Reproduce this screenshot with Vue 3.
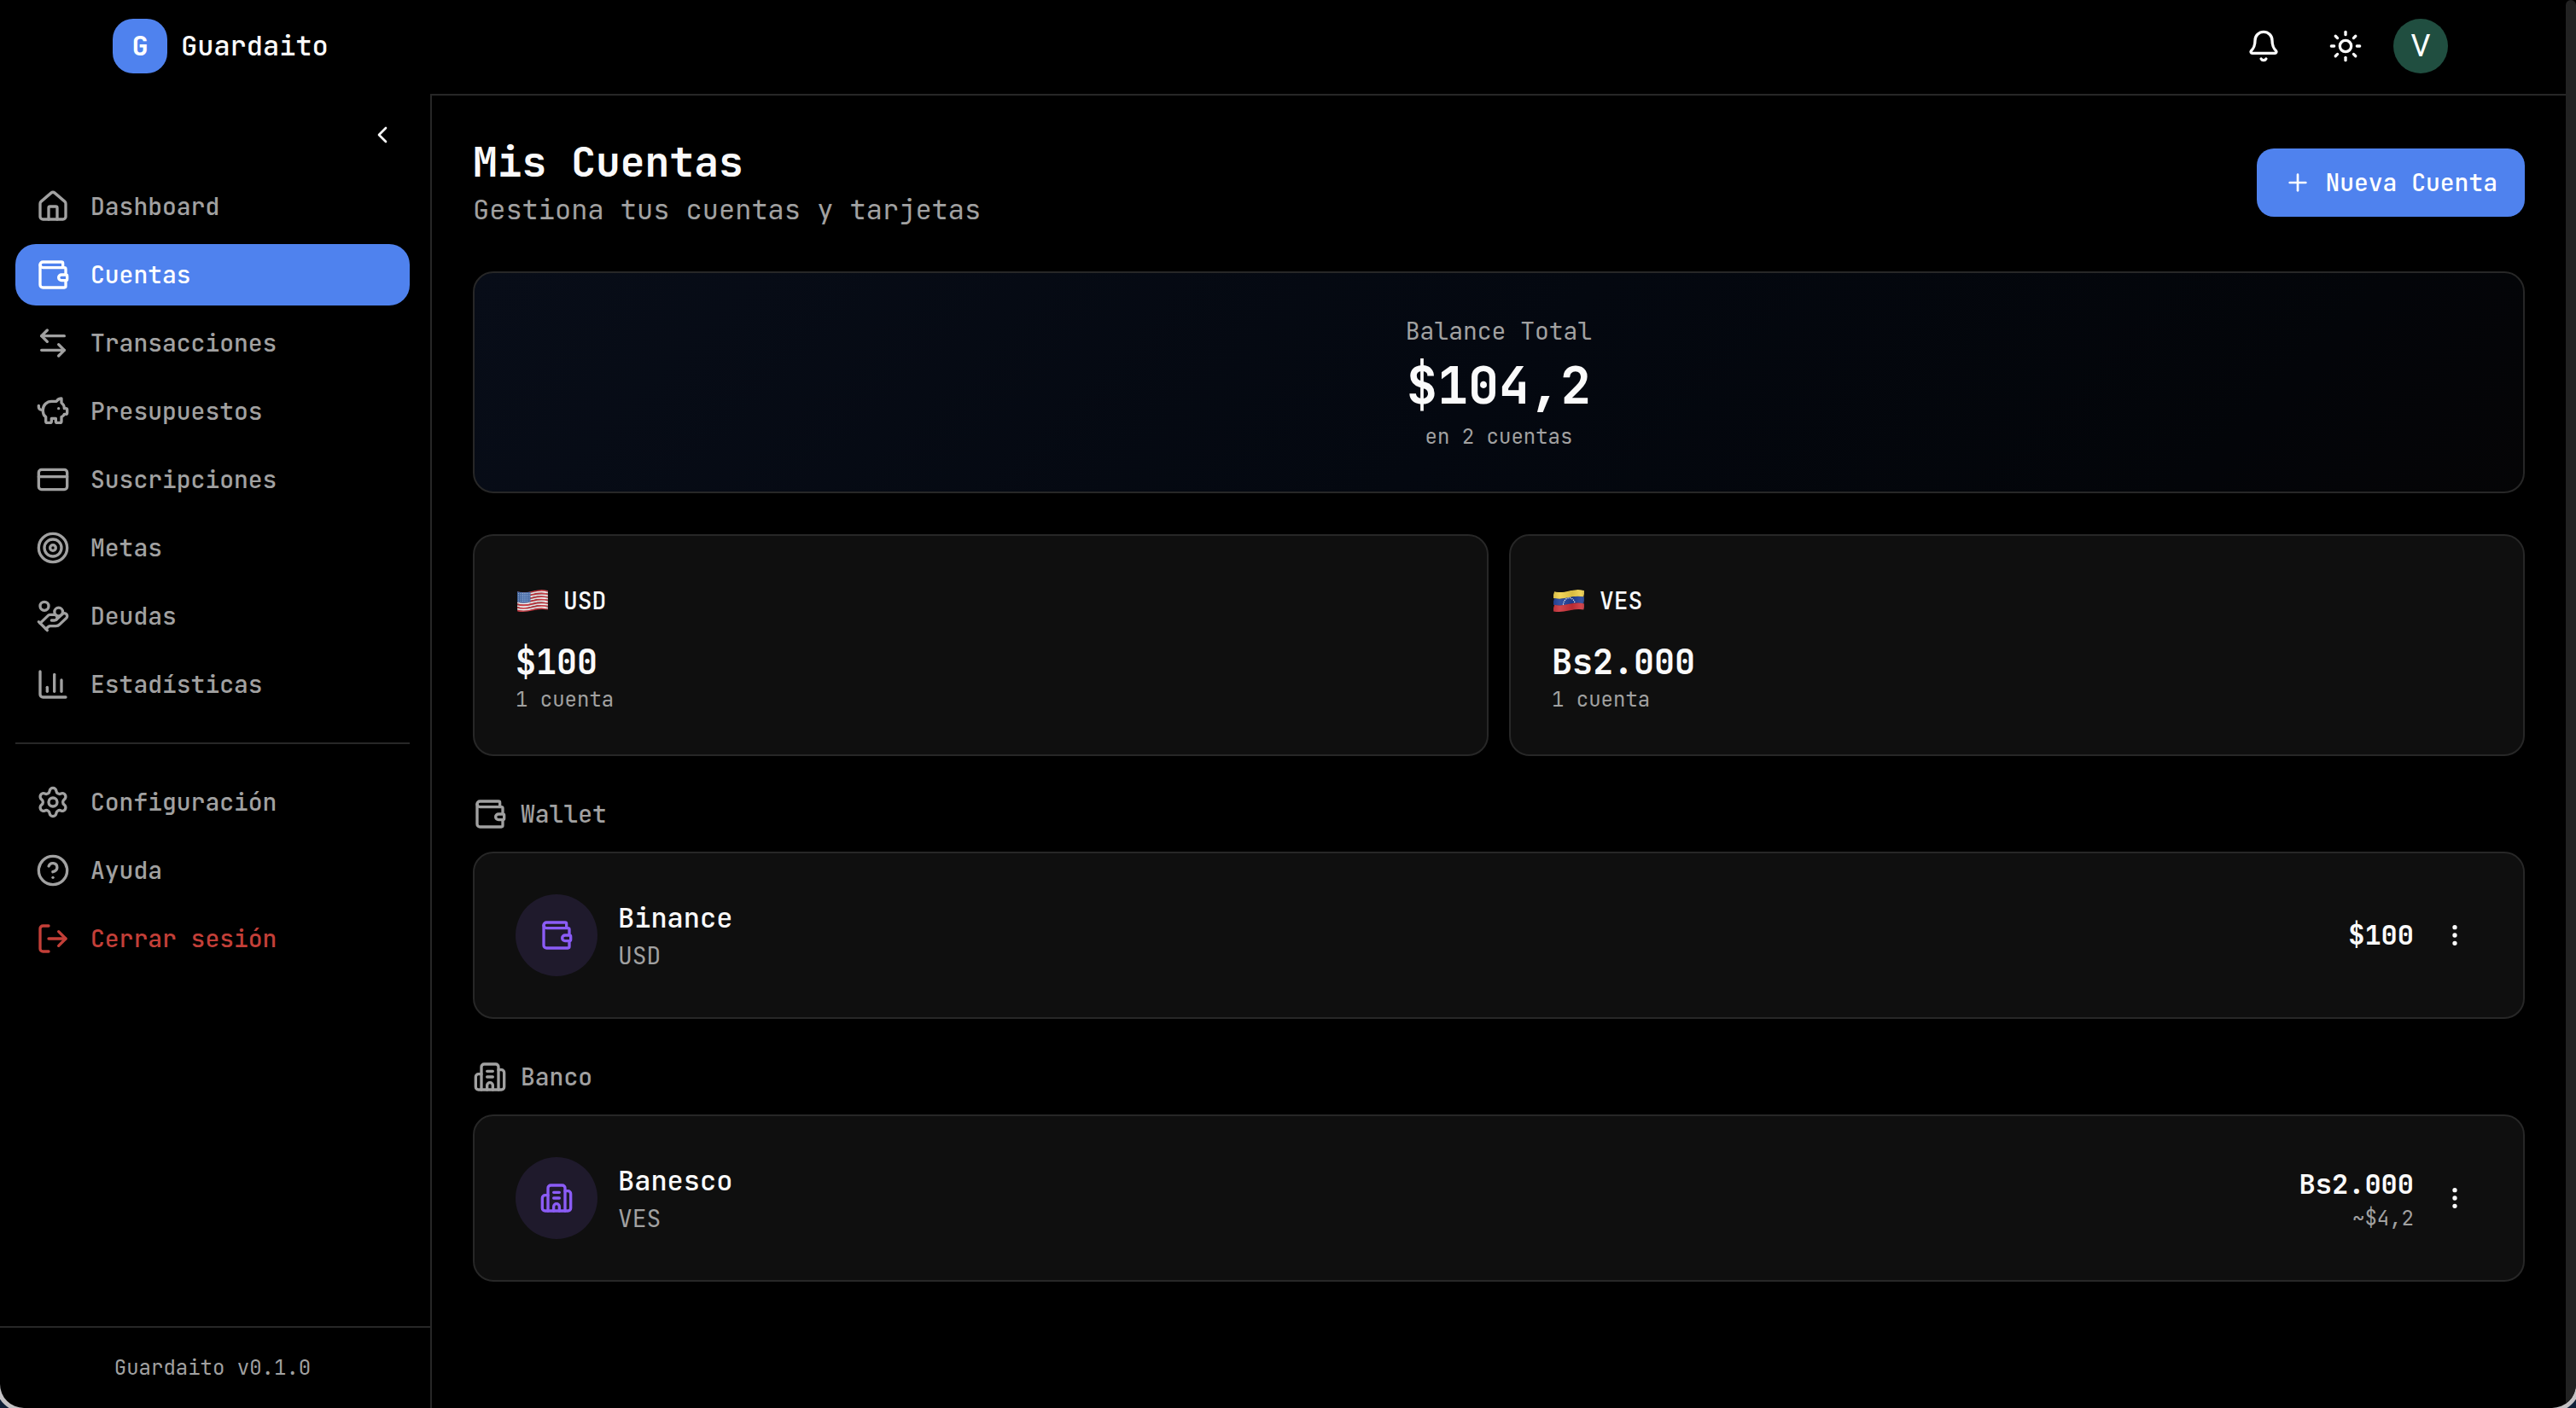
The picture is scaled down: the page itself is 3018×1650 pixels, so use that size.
<template>
  <div class="window">
    <div class="page">
      <!-- Barra superior -->
      <header class="topbar">
        <a href="#" class="brand">
          <span class="brand-logo">G</span>
          <span class="brand-name">Guardaito</span>
        </a>
        <div class="topbar-actions">
          <button class="icon-btn" aria-label="Notificaciones">
            <AppIcon name="bell" />
          </button>
          <button class="icon-btn" aria-label="Cambiar tema">
            <AppIcon name="sun" />
          </button>
          <button class="avatar" aria-label="Perfil">V</button>
        </div>
      </header>

      <div class="body">
        <!-- Menú lateral -->
        <aside class="sidebar">
          <div class="sidebar-top">
            <button class="collapse-btn" aria-label="Contraer menú">
              <AppIcon name="chevron" :size="32" />
            </button>
          </div>

          <nav class="nav">
            <a
              v-for="item in mainItems"
              :key="item.label"
              href="#"
              class="nav-item"
              :class="{ active: item.label === current }"
              @click.prevent="current = item.label"
            >
              <AppIcon :name="item.icon" />
              <span>{{ item.label }}</span>
            </a>
            <hr class="divider" />
            <a
              v-for="item in otherItems"
              :key="item.label"
              href="#"
              class="nav-item"
            >
              <AppIcon :name="item.icon" />
              <span>{{ item.label }}</span>
            </a>
            <button class="nav-item danger">
              <AppIcon name="logout" />
              <span>Cerrar sesión</span>
            </button>
          </nav>

          <footer class="version">Guardaito v0.1.0</footer>
        </aside>

        <!-- Contenido -->
        <main class="content">
          <div class="page-head">
            <div>
              <h1>Mis Cuentas</h1>
              <p class="subtitle">Gestiona tus cuentas y tarjetas</p>
            </div>
            <button class="btn-primary">
              <AppIcon name="plus" :size="32" />
              <span>Nueva Cuenta</span>
            </button>
          </div>

          <section class="card balance">
            <p class="label">Balance Total</p>
            <p class="total">$104,2</p>
            <p class="small">en 2 cuentas</p>
          </section>

          <div class="currencies">
            <section v-for="c in currencies" :key="c.code" class="card">
              <div class="currency-head">
                <svg class="flag" viewBox="0 0 40 28" aria-hidden="true">
                  <defs>
                    <clipPath :id="'flag-' + c.code">
                      <path :d="flagShape" />
                    </clipPath>
                    <linearGradient :id="'shade-' + c.code" x1="0" x2="1">
                      <stop offset="0" stop-color="#000" stop-opacity="0.15" />
                      <stop offset="0.25" stop-color="#fff" stop-opacity="0.1" />
                      <stop offset="0.6" stop-color="#000" stop-opacity="0.1" />
                      <stop offset="0.85" stop-color="#fff" stop-opacity="0.1" />
                      <stop offset="1" stop-color="#000" stop-opacity="0.3" />
                    </linearGradient>
                  </defs>
                  <g :clip-path="`url(#flag-${c.code})`">
                    <template v-if="c.code === 'USD'">
                      <path
                        v-for="n in 13"
                        :key="n"
                        :d="wave"
                        fill="none"
                        :stroke="n % 2 ? '#c8313a' : '#f4f4f4'"
                        stroke-width="2"
                        :transform="`translate(0 ${(n - 1) * 1.8 + 0.9})`"
                      />
                      <path
                        d="M2 3C7 4.6 12 4.4 17.500 3.200V15.600C12 17 7 17 2 15.600Z"
                        fill="#3f68a8"
                      />
                      <g fill="#c3d3ec">
                        <circle
                          v-for="n in 30"
                          :key="n"
                          :cx="3.5 + ((n - 1) % 6) * 2.5"
                          :cy="5.4 + Math.floor((n - 1) / 6) * 2.2"
                          r="0.5"
                        />
                      </g>
                    </template>
                    <template v-else>
                      <path
                        v-for="(color, i) in ['#f0d048', '#1f3f98', '#cc3038']"
                        :key="color"
                        :d="wave"
                        fill="none"
                        :stroke="color"
                        stroke-width="8"
                        :transform="`translate(0 ${i * 7.8 + 3.9})`"
                      />
                      <path
                        d="M13.500 18C15 8.600 25 8.600 27 16.300"
                        fill="none"
                        stroke="#fff"
                        stroke-width="1.400"
                        stroke-linecap="round"
                        stroke-dasharray="0.1 2.3"
                      />
                    </template>
                    <rect width="40" height="28" :fill="`url(#shade-${c.code})`" />
                  </g>
                </svg>
                <span>{{ c.code }}</span>
              </div>
              <p class="currency-amount">{{ c.amount }}</p>
              <p class="small">{{ c.detail }}</p>
            </section>
          </div>

          <section v-for="g in groups" :key="g.title" class="group">
            <h2>
              <AppIcon :name="g.icon" />
              <span>{{ g.title }}</span>
            </h2>
            <div v-for="a in g.accounts" :key="a.name" class="card account">
              <div class="account-icon">
                <AppIcon :name="g.icon" />
              </div>
              <div class="account-info">
                <p class="account-name">{{ a.name }}</p>
                <p class="label">{{ a.currency }}</p>
              </div>
              <div class="account-balance">
                <p class="account-amount">{{ a.amount }}</p>
                <p v-if="a.converted" class="small">{{ a.converted }}</p>
              </div>
              <button class="more-btn" :aria-label="'Opciones de ' + a.name">
                <AppIcon name="more" :size="32" />
              </button>
            </div>
          </section>
        </main>
      </div>
    </div>
    <div class="scroll-track"></div>
  </div>
</template>

<script setup>
import { ref, h } from 'vue';

// Iconos: trazos y círculos [cx, cy, r] sobre una caja de 24
const icons = {
  bell: {
    paths: [
      'M10.268 21a2 2 0 0 0 3.464 0',
      'M3.262 15.326A1 1 0 0 0 4 17h16a1 1 0 0 0 .74-1.673C19.41 13.956 18 12.499 18 8A6 6 0 0 0 6 8c0 4.499-1.411 5.956-2.738 7.326',
    ],
  },
  sun: {
    paths: [
      'M12 2v2',
      'M12 20v2',
      'm4.93 4.93 1.41 1.41',
      'm17.66 17.66 1.41 1.41',
      'M2 12h2',
      'M20 12h2',
      'm6.34 17.66-1.41 1.41',
      'm19.07 4.93-1.41 1.41',
    ],
    circles: [[12, 12, 4]],
  },
  chevron: { paths: ['m15 18-6-6 6-6'] },
  plus: { paths: ['M5 12h14', 'M12 5v14'] },
  more: {
    circles: [
      [12, 12, 1],
      [12, 5, 1],
      [12, 19, 1],
    ],
  },
  home: {
    paths: [
      'M15 21v-8a1 1 0 0 0-1-1h-4a1 1 0 0 0-1 1v8',
      'M3 10a2 2 0 0 1 .709-1.528l7-5.999a2 2 0 0 1 2.582 0l7 5.999A2 2 0 0 1 21 10v9a2 2 0 0 1-2 2H5a2 2 0 0 1-2-2z',
    ],
  },
  wallet: {
    paths: [
      'M19 7V4a1 1 0 0 0-1-1H5a2 2 0 0 0 0 4h15a1 1 0 0 1 1 1v4h-3a2 2 0 0 0 0 4h3a1 1 0 0 0 1-1v-2a1 1 0 0 0-1-1',
      'M3 5v14a2 2 0 0 0 2 2h15a1 1 0 0 0 1-1v-4',
    ],
  },
  transfer: {
    paths: ['M8 3 4 7l4 4', 'M4 7h16', 'm16 21 4-4-4-4', 'M20 17H4'],
  },
  piggy: {
    paths: [
      'M11 17h3v2a1 1 0 0 0 1 1h2a1 1 0 0 0 1-1v-3a3.16 3.16 0 0 0 2-2h1a1 1 0 0 0 1-1v-2a1 1 0 0 0-1-1h-1a5 5 0 0 0-2-4V3a4 4 0 0 0-3.2 1.6l-.3.4H11a6 6 0 0 0-6 6v1a5 5 0 0 0 2 4v3a1 1 0 0 0 1 1h2a1 1 0 0 0 1-1z',
      'M16 10h.01',
      'M2 8v1a2 2 0 0 0 2 2h1',
    ],
  },
  card: {
    paths: [
      'M4 5h16a2 2 0 0 1 2 2v10a2 2 0 0 1-2 2H4a2 2 0 0 1-2-2V7a2 2 0 0 1 2-2z',
      'M2 10h20',
    ],
  },
  target: {
    circles: [
      [12, 12, 10],
      [12, 12, 6],
      [12, 12, 2],
    ],
  },
  coins: {
    paths: [
      'M11 15h2a2 2 0 1 0 0-4h-3c-.6 0-1.1.2-1.4.6L3 17',
      'm7 21 1.6-1.4c.3-.4.8-.6 1.4-.6h4c1.1 0 2.1-.4 2.8-1.2l4.6-4.4a2 2 0 0 0-2.75-2.91l-4.2 3.9',
      'm2 16 6 6',
    ],
    circles: [
      [16, 9, 2.9],
      [6, 5, 3],
    ],
  },
  chart: {
    paths: ['M3 3v16a2 2 0 0 0 2 2h16', 'M18 17V9', 'M13 17V5', 'M8 17v-3'],
  },
  settings: {
    paths: [
      'M9.671 4.136a2.34 2.34 0 0 1 4.659 0 2.34 2.34 0 0 0 3.319 1.915 2.34 2.34 0 0 1 2.33 4.033 2.34 2.34 0 0 0 0 3.831 2.34 2.34 0 0 1-2.33 4.033 2.34 2.34 0 0 0-3.319 1.915 2.34 2.34 0 0 1-4.659 0 2.34 2.34 0 0 0-3.32-1.915 2.34 2.34 0 0 1-2.33-4.033 2.34 2.34 0 0 0 0-3.831A2.34 2.34 0 0 1 6.35 6.051a2.34 2.34 0 0 0 3.319-1.915',
    ],
    circles: [[12, 12, 3]],
  },
  help: {
    paths: ['M9.09 9a3 3 0 0 1 5.83 1c0 2-3 3-3 3', 'M12 17h.01'],
    circles: [[12, 12, 10]],
  },
  logout: {
    paths: [
      'm16 17 5-5-5-5',
      'M21 12H9',
      'M9 21H5a2 2 0 0 1-2-2V5a2 2 0 0 1 2-2h4',
    ],
  },
  building: {
    paths: [
      'M10 12h4',
      'M10 8h4',
      'M14 21v-3a2 2 0 0 0-4 0v3',
      'M6 10H4a2 2 0 0 0-2 2v7a2 2 0 0 0 2 2h16a2 2 0 0 0 2-2V9a2 2 0 0 0-2-2h-2',
      'M6 21V5a2 2 0 0 1 2-2h8a2 2 0 0 1 2 2v16',
    ],
  },
};

const AppIcon = ({ name, size = 40 }) => {
  const { paths = [], circles = [] } = icons[name];
  return h(
    'svg',
    {
      class: 'icon',
      width: size,
      height: size,
      viewBox: '0 0 24 24',
      'aria-hidden': 'true',
    },
    [
      ...paths.map((d) => h('path', { d })),
      ...circles.map(([cx, cy, r]) => h('circle', { cx, cy, r })),
    ],
  );
};
AppIcon.props = ['name', 'size'];

// Banderas ondeadas
const wave = 'M2 3C8 5 14 4 20 2.500S32 0.500 38 2';
const flagShape = wave + 'V24.500C32 23.500 26 24 20 25.500S8 27.500 2 26.500Z';

const current = ref('Cuentas');

const mainItems = [
  { label: 'Dashboard', icon: 'home' },
  { label: 'Cuentas', icon: 'wallet' },
  { label: 'Transacciones', icon: 'transfer' },
  { label: 'Presupuestos', icon: 'piggy' },
  { label: 'Suscripciones', icon: 'card' },
  { label: 'Metas', icon: 'target' },
  { label: 'Deudas', icon: 'coins' },
  { label: 'Estadísticas', icon: 'chart' },
];

const otherItems = [
  { label: 'Configuración', icon: 'settings' },
  { label: 'Ayuda', icon: 'help' },
];

const currencies = [
  { code: 'USD', amount: '$100', detail: '1 cuenta' },
  { code: 'VES', amount: 'Bs2.000', detail: '1 cuenta' },
];

const groups = [
  {
    title: 'Wallet',
    icon: 'wallet',
    accounts: [{ name: 'Binance', currency: 'USD', amount: '$100' }],
  },
  {
    title: 'Banco',
    icon: 'building',
    accounts: [
      {
        name: 'Banesco',
        currency: 'VES',
        amount: 'Bs2.000',
        converted: '~$4,2',
      },
    ],
  },
];
</script>

<style>
body {
  background: #0f2038;
}
</style>

<style scoped>
* {
  box-sizing: border-box;
}

h1,
h2,
p {
  margin: 0;
}

button {
  padding: 0;
  border: none;
  background: none;
  color: inherit;
  font: inherit;
  cursor: pointer;
}

a {
  color: inherit;
  text-decoration: none;
}

/* Ventana */
.window {
  display: flex;
  min-height: 100vh;
  background: #000;
  color: #fafafa;
  font-family: 'JetBrains Mono', 'DejaVu Sans Mono', monospace;
  font-size: 28px;
  line-height: 40px;
  border-radius: 0 0 28px 28px;
  box-shadow: 0 0 0 5px #c4c2c4;
  overflow: hidden;
}

.page {
  flex: 1;
  min-width: 0;
  display: flex;
  flex-direction: column;
}

.scroll-track {
  width: 12px;
  background: #222;
  border-radius: 6px 6px 0 0;
}

.icon {
  flex-shrink: 0;
  display: block;
  fill: none;
  stroke: currentColor;
  stroke-width: 2;
  stroke-linecap: round;
  stroke-linejoin: round;
}

/* Barra superior */
.topbar {
  display: flex;
  align-items: center;
  justify-content: space-between;
  padding: 22px 138px 24px 132px;
}

.brand {
  display: flex;
  align-items: center;
  gap: 16px;
  font-size: 32px;
}

.brand-name {
  font-weight: 500;
}

.brand-logo {
  display: flex;
  align-items: center;
  justify-content: center;
  width: 64px;
  height: 64px;
  border-radius: 24px;
  background: #4f82ee;
  color: #fff;
  font-weight: 700;
}

.topbar-actions {
  display: flex;
  align-items: center;
  gap: 16px;
}

.icon-btn {
  display: flex;
  align-items: center;
  justify-content: center;
  width: 80px;
  height: 64px;
}

.avatar {
  width: 64px;
  height: 64px;
  border-radius: 50%;
  background: #204e40;
  color: #fff;
  font-family: Roboto, sans-serif;
  font-size: 36px;
  font-weight: 400;
}

.body {
  flex: 1;
  display: flex;
}

/* Menú lateral */
.sidebar {
  flex-shrink: 0;
  display: flex;
  flex-direction: column;
  width: 506px;
  border-right: 2px solid #272727;
}

.sidebar-top {
  display: flex;
  justify-content: flex-end;
  padding: 16px 24px;
}

.collapse-btn {
  display: flex;
  align-items: center;
  justify-content: center;
  width: 64px;
  height: 64px;
}

.nav {
  display: flex;
  flex-direction: column;
  gap: 8px;
  padding: 0 24px 0 18px;
}

.nav-item {
  display: flex;
  align-items: center;
  gap: 24px;
  height: 72px;
  padding: 0 24px;
  border-radius: 24px;
  color: #a1a1a1;
  font-weight: 500;
}

.nav-item.active {
  background: #4f82ee;
  color: #fff;
}

.nav-item.danger {
  color: #c33f38;
}

.divider {
  width: 100%;
  height: 2px;
  margin: 24px 0;
  border: none;
  background: #272727;
}

.version {
  margin-top: auto;
  padding: 31px 24px 31px 18px;
  border-top: 2px solid #272727;
  color: #a1a1a1;
  font-size: 24px;
  line-height: 32px;
  text-align: center;
}

/* Contenido */
.content {
  flex: 1;
  min-width: 0;
  display: flex;
  flex-direction: column;
  gap: 48px;
  padding: 46px 48px 48px;
  border-top: 2px solid #272727;
}

.page-head {
  display: flex;
  align-items: center;
  justify-content: space-between;
}

h1 {
  font-size: 48px;
  font-weight: 700;
  line-height: 64px;
}

.subtitle {
  color: #a1a1a1;
  font-size: 32px;
  line-height: 48px;
}

.btn-primary {
  display: flex;
  align-items: center;
  gap: 16px;
  height: 80px;
  padding: 0 32px;
  border-radius: 20px;
  background: #4f82ee;
  color: #fff;
  font-weight: 500;
}

.card {
  padding: 48px;
  border: 2px solid #272727;
  border-radius: 24px;
  background: #0f0f0f;
}

.label {
  color: #a1a1a1;
}

.small {
  color: #a1a1a1;
  font-size: 24px;
  line-height: 32px;
}

.balance {
  background: linear-gradient(
    135deg,
    #080d18,
    #040810 50%,
    #030509 85%,
    #050506
  );
  text-align: center;
}

.total {
  margin: 8px 0;
  font-size: 60px;
  font-weight: 700;
  line-height: 72px;
}

.currencies {
  display: grid;
  grid-template-columns: 1fr 1fr;
  gap: 24px;
}

.currency-head {
  display: flex;
  align-items: center;
  gap: 16px;
  height: 56px;
  margin-bottom: 16px;
  font-weight: 500;
}

.flag {
  width: 40px;
  height: 28px;
}

.currency-amount {
  font-size: 40px;
  font-weight: 700;
  line-height: 56px;
}

/* Grupos de cuentas */
.group h2 {
  display: flex;
  align-items: center;
  gap: 16px;
  margin-bottom: 24px;
  color: #a1a1a1;
  font-size: 28px;
  font-weight: 500;
}

.account {
  display: flex;
  align-items: center;
}

.account-icon {
  display: flex;
  align-items: center;
  justify-content: center;
  width: 96px;
  height: 96px;
  margin-right: 24px;
  border-radius: 50%;
  background: #1f1a2c;
  color: #8b5cf6;
}

.account-info {
  flex: 1;
}

.account-name,
.account-amount {
  font-size: 32px;
  line-height: 48px;
}

.account-name {
  font-weight: 500;
}

.account-amount {
  font-weight: 700;
}

.account-balance {
  text-align: right;
}

.more-btn {
  display: flex;
  align-items: center;
  justify-content: center;
  width: 64px;
  height: 64px;
  margin-left: 16px;
}
</style>
